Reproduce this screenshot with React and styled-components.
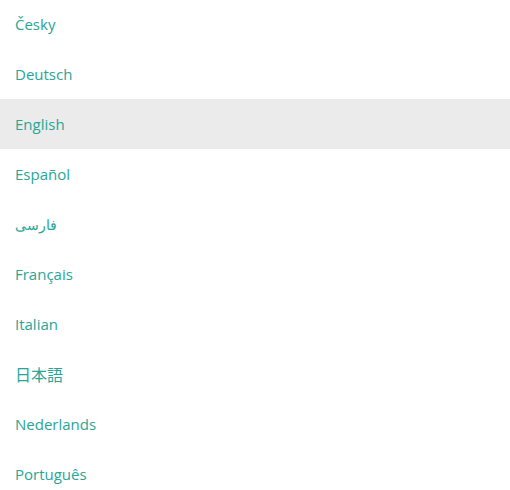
import React from "react";
import styled, { createGlobalStyle } from "styled-components";

const GlobalStyle = createGlobalStyle`
  html, body {
    margin: 0;
    padding: 0;
    background: #fff;
    overflow: hidden;
  }
`;

const LANGUAGES = [
  { code: "cs", label: "Česky" },
  { code: "de", label: "Deutsch" },
  { code: "en", label: "English" },
  { code: "es", label: "Español" },
  { code: "fa", label: "فارسی", size: 14 },
  { code: "fr", label: "Français" },
  { code: "it", label: "Italian" },
  { code: "ja", label: "日本語", size: 16 },
  { code: "nl", label: "Nederlands" },
  { code: "pt", label: "Português" }
];

const List = styled.ul`
  list-style: none;
  margin: -1px 0 0;
  padding: 0;
  width: 510px;
`;

const Item = styled.li`
  display: flex;
  align-items: center;
  height: 50px;
  padding: 0 15px;
  box-sizing: border-box;
  background: ${props => (props.$active ? "#ebebeb" : "transparent")};
  color: #29a597;
  font-family: "Open Sans", "Noto Sans CJK JP", sans-serif;
  font-size: ${props => props.$size || 15}px;
  cursor: pointer;
`;

export default function App() {
  return (
    <>
      <GlobalStyle />
      <List>
        {LANGUAGES.map(lang => (
          <Item key={lang.code} $active={lang.code === "en"} $size={lang.size}>
            {lang.label}
          </Item>
        ))}
      </List>
    </>
  );
}
